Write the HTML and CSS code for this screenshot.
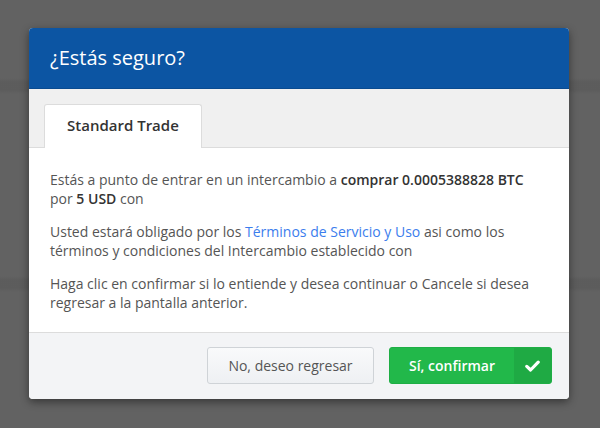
FILE: index.html
```html
<!DOCTYPE html>
<html lang="es">
<head>
<meta charset="utf-8">
<title>¿Estás seguro?</title>
<link rel="stylesheet" href="styles.css">
</head>
<body>
<div class="backdrop">
  <div class="modal">
    <div class="modal-header">
      <h1 class="modal-title">¿Estás seguro?</h1>
    </div>
    <div class="tabs">
      <div class="tab active">Standard Trade</div>
    </div>
    <div class="modal-body">
      <p>Estás a punto de entrar en un intercambio a <strong>comprar 0.0005388828 BTC</strong> por <strong>5 USD</strong> con</p>
      <p>Usted estará obligado por los <a href="#" class="link">Términos de Servicio y Uso</a> asi como los términos y condiciones del Intercambio establecido con</p>
      <p>Haga clic en confirmar si lo entiende y desea continuar o Cancele si desea regresar a la pantalla anterior.</p>
    </div>
    <div class="modal-footer">
      <button class="btn btn-default">No, deseo regresar</button>
      <button class="btn btn-success">
        <span class="btn-label">Sí, confirmar</span>
        <span class="btn-icon">
          <svg width="15" height="12" viewBox="0 0 15 12"><path d="M1.8 6.4 L5.6 10 L13.2 2.2" fill="none" stroke="#fff" stroke-width="3.2" stroke-linecap="round" stroke-linejoin="round"/></svg>
        </span>
      </button>
    </div>
  </div>
</div>
</body>
</html>
```
FILE: styles.css
```css
* { box-sizing: border-box; }
html, body { margin: 0; padding: 0; }
body {
  width: 600px;
  height: 428px;
  overflow: hidden;
  background: #616161;
  font-family: "Open Sans", "Noto Sans", sans-serif;
}
.backdrop {
  height: 428px;
  padding: 28px 31px 0 29px;
  background:
    linear-gradient(to bottom, transparent 78px, rgba(0,0,0,0.06) 82px, rgba(0,0,0,0.06) 90px, transparent 94px),
    linear-gradient(to bottom, transparent 276px, rgba(0,0,0,0.06) 280px, rgba(0,0,0,0.06) 288px, transparent 292px),
    #626262;
}
.modal {
  width: 540px;
  background: #fff;
  border-radius: 4px;
  overflow: hidden;
  box-shadow: 0 3px 9px rgba(0,0,0,0.45);
}
.modal-header {
  background: #0c55a3;
  border-bottom: 1px solid #0a4b90;
  padding: 15px 21px;
}
.modal-title {
  margin: 0;
  font-size: 20px;
  line-height: 30px;
  font-weight: 400;
  color: #fff;
}
.tabs {
  background: #f0f0f0;
  border-bottom: 1px solid #dcdcdc;
  padding: 15px 15px 0 15px;
  display: flex;
}
.tab {
  background: #fff;
  border: 1px solid #dcdcdc;
  border-bottom: none;
  border-radius: 3px 3px 0 0;
  padding: 10px 22px 12px;
  margin-bottom: -1px;
  font-size: 15px;
  line-height: 20px;
  font-weight: 600;
  color: #333;
  height: 44px;
}
.modal-body {
  padding: 22px 21px 20px;
  color: #555;
  font-size: 14px;
  line-height: 19px;
}
.modal-body p { margin: 0 0 14px; }
.modal-body p:last-child { margin-bottom: 0; }
.modal-body strong { color: #333; font-weight: 600; }
.link { color: #3b7ded; text-decoration: none; }
.modal-footer {
  background: #f3f4f6;
  border-top: 1px solid #dcdcdc;
  padding: 14px 17px 15px;
  display: flex;
  justify-content: flex-end;
  gap: 15px;
}
.btn {
  height: 37px;
  border-radius: 3px;
  font-family: inherit;
  font-size: 14px;
  padding: 0;
  display: flex;
  align-items: center;
  cursor: pointer;
}
.btn-default {
  width: 167px;
  justify-content: center;
  background: linear-gradient(to bottom, #f9fafb, #eef0f3);
  border: 1px solid #cfd3d7;
  color: #555;
}
.btn-success {
  width: 163px;
  background: #22b84a;
  border: 1px solid #1fae45;
  color: #fff;
  font-weight: 600;
  overflow: hidden;
}
.btn-label {
  flex: 1;
  text-align: center;
}
.btn-icon {
  width: 37px;
  height: 100%;
  background: #1faa44;
  display: flex;
  align-items: center;
  justify-content: center;
}
```
